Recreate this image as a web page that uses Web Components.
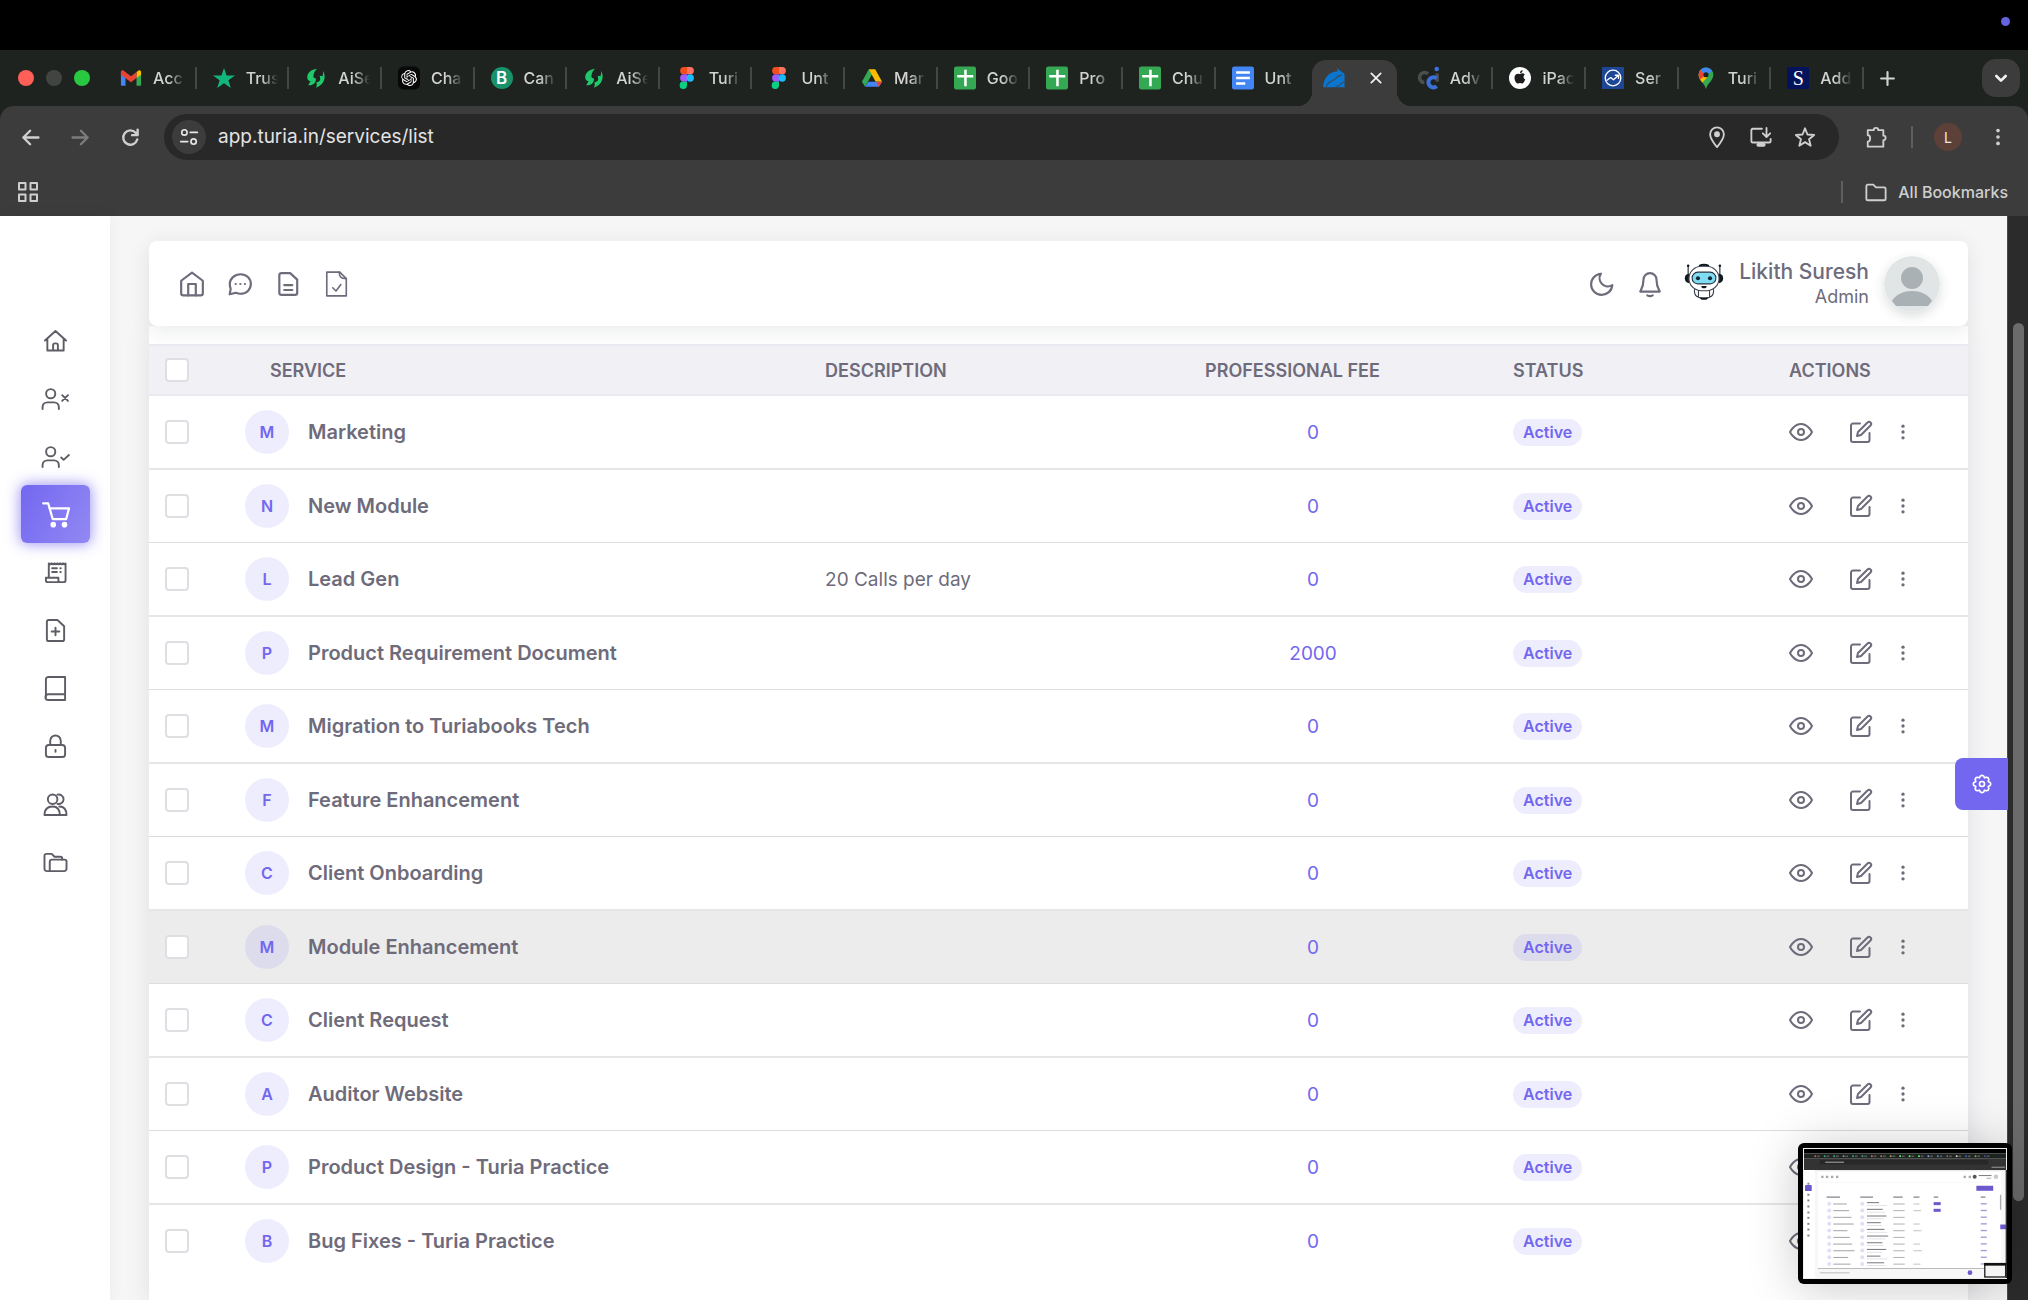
<!DOCTYPE html>
<html lang="en">
<head>
<meta charset="utf-8">
<meta name="viewport" content="width=device-width, initial-scale=1">
<title>Turia - Services</title>
<style>
  html, body {
    margin: 0;
    height: 100%;
    overflow: hidden;
    background-color: #000;
    font-family: Inter, "Liberation Sans", sans-serif;
  }

  body {
    display: flex;
    flex-direction: column;
  }
</style>
</head>
<body>

<system-bar></system-bar>
<tab-strip></tab-strip>
<address-bar url="app.turia.in/services/list"></address-bar>
<bookmarks-bar></bookmarks-bar>
<page-view>
  <side-menu slot="menu"></side-menu>
  <app-navbar>
    <span slot="name">Likith Suresh</span>
    <span slot="role">Admin</span>
  </app-navbar>
  <services-table></services-table>
</page-view>
<screen-preview></screen-preview>

<script>
const gearPath = () => {
  let d = ''
  for (let i = 0; i < 16; i++) {
    const a = i * Math.PI / 8
    const b = a + Math.PI / 8
    const r = i % 2 ? 8 : 10.5
    const n = i % 2 ? 10.5 : 8
    const x = 12 + r * Math.sin(a)
    const y = 12 - r * Math.cos(a)
    const mx = 12 + ((r + n) / 2 + 0.6) * Math.sin((a + b) / 2)
    const my = 12 - ((r + n) / 2 + 0.6) * Math.cos((a + b) / 2)
    d += `${i ? 'L' : 'M'}${x.toFixed(1)} ${y.toFixed(1)}L${mx.toFixed(1)} ${my.toFixed(1)}`
  }
  return d + 'Z'
}

const person = '<circle cx="7" cy="7" r="4.800"/><path d="M-1.500 23v-2a5 5 0 0 1 5-5h7a5 5 0 0 1 5 5v2"/>'

// Outline icons are drawn with currentColor, brand icons bring their own fills.
const icons = {
  home: '<path d="M2 9l10-7.500L22 9v11.500a2 2 0 0 1-2 2H4a2 2 0 0 1-2-2z"/><path d="M8.500 22.500V12h7v10.500"/>',
  chat: '<path d="M12.500 3C18 3 22 7 22 12s-4 9-9.500 9c-1.500 0-3-.3-4.200-.9L2.500 21.500l.9-5C3 15.500 2.600 14 2.600 12 2.600 7 7 3 12.500 3z"/><path d="M8 12h.1M12.300 12h.1M16.500 12h.1"/>',
  file: '<path d="M4 4a2 2 0 0 1 2-2h8l6.500 6v12a2 2 0 0 1-2 2H6a2 2 0 0 1-2-2z"/><path d="M8.500 13h7.500M8.500 17.500h7.500"/>',
  fileCheck: '<path d="M3.500 1h12l6 6v16h-18z"/><path d="M15 1c0 4 1 6 6.500 6M9 15.500l3 3 4.500-6"/>',
  moon: '<path d="M21.500 13A9.800 9.800 0 1 1 11 2.500 7.600 7.600 0 0 0 21.500 13z"/>',
  bell: '<path d="M18 8A6 6 0 0 0 6 8c0 6-2 9-3 11h18c-1-2-3-5-3-11"/><path d="M9.500 22.500a4 3 0 0 0 5 0"/>',
  eye: '<path d="M1 12s4-8 11-8 11 8 11 8-4 8-11 8-11-8-11-8z"/><circle cx="12" cy="12" r="3"/>',
  edit: '<path d="M11 3.500H4a2 2 0 0 0-2 2V20a2 2 0 0 0 2 2h14.500a2 2 0 0 0 2-2v-7"/><path d="M18.500 2.500a2.100 2.100 0 0 1 3 3L12 15l-4 1 1-4z"/>',
  dots: '<g fill="currentColor" stroke="none"><circle cx="12" cy="5" r="2"/><circle cx="12" cy="12" r="2"/><circle cx="12" cy="19" r="2"/></g>',
  house: '<path d="M1 12L12 2l11 10M3.500 10v12.500h17V10M9.500 22.500V17a2 2 0 0 1 2-2h1a2 2 0 0 1 2 2v5.500"/>',
  userX: person + '<path d="M19 8.500l6 6M25 8.500l-6 6"/>',
  userCheck: person + '<path d="M18 13l2.500 2.500 5.500-5"/>',
  cart: '<path d="M1 2h4.500l4 14h12L24 6.500H6.500"/><circle cx="10" cy="21" r="1.500" fill="currentColor"/><circle cx="20" cy="21" r="1.500" fill="currentColor"/>',
  receipt: '<path d="M5 17V2.500l1.500 1L8 2.500l1.500 1 1.500-1 1.500 1 1.500-1 1.500 1 1.500-1 1.500 1 1.500-1 1.500 1 1 -1V20a2 2 0 0 1-2 2H4a2 2 0 0 1-2-2v-2.500h13V20a2 2 0 0 0 2 2"/><path d="M8.500 7.500h5M8.500 11.500h5M17 7.500h.5M17 11.500h.5"/>',
  filePlus: '<path d="M3 3a2 2 0 0 1 2-2h9l7 6.500V21a2 2 0 0 1-2 2H5a2 2 0 0 1-2-2z"/><path d="M12 9v8M8 13h8"/>',
  book: '<path d="M2 21V2.500A2.500 2.500 0 0 1 4.500 0H22v24H4.500a3 3 0 0 1 0-6H22"/>',
  lock: '<rect x="2" y="10.500" width="20" height="12.500" rx="3"/><path d="M6.500 10.500V6a5.500 5.500 0 0 1 11 0v4.500M12 15.500v2"/>',
  users: '<circle cx="9" cy="6.500" r="5"/><path d="M.500 23c0-6 3-9 8.500-9s7.500 3 7.500 9zM14 1.700a5 5 0 1 1 0 9.600M16 14c5 0 7.500 3 7.500 9h-7"/>',
  folders: '<path d="M6 21H3a2.500 2.500 0 0 1-2.500-2.500V5a2 2 0 0 1 2-2H8l3 3h6a2 2 0 0 1 2 2v1"/><path d="M6 21v-9.500A2.500 2.500 0 0 1 8.500 9h13a2 2 0 0 1 2 2v7.500A2.500 2.500 0 0 1 21 21z"/>',
  gear: `<path d="${gearPath()}"/><circle cx="12" cy="12" r="3"/>`,
  back: '<path d="M22 12H3M11.500 3.500L3 12l8.500 8.500"/>',
  forward: '<path d="M2 12h19M12.500 3.500L21 12l-8.500 8.500"/>',
  reload: '<path d="M20.500 14.500A9 9 0 1 1 18.500 6l2 2.500M21 2v7h-7"/>',
  tune: '<circle cx="6.500" cy="6.500" r="3.200"/><path d="M13.500 6.500H22M2 17.500h8.500"/><circle cx="17.500" cy="17.500" r="3.200"/>',
  pin: '<path d="M12 23C7 17 4.500 13 4.500 9a7.500 7.500 0 0 1 15 0c0 4-2.500 8-7.500 14z"/><circle cx="12" cy="9" r="2.200" fill="currentColor"/>',
  install: '<path d="M13 3H3A1.500 1.500 0 0 0 1.500 4.500v12A1.500 1.500 0 0 0 3 18h18a1.500 1.500 0 0 0 1.500-1.500V14M18 2v9M14 8l4 4 4-4"/><path d="M9 20.500h6" stroke-width="4"/>',
  star: '<path d="M12 2.500l2.700 6.800 7.300.5-5.600 4.700 1.800 7-6.200-3.900-6.200 3.900 1.800-7L2 9.800l7.300-.5z"/>',
  puzzle: '<path d="M3 4.500h6.500a2.500 2.500 0 0 1 5 0H20v6a2.500 2.500 0 0 1 0 5V22.500H3V17c3.500 0 3.500-7 0-7z"/>',
  grid: '<path d="M3 3h6.500v6.500H3zM14.500 3H21v6.500h-6.500zM3 14.500h6.500V21H3zM14.500 14.500H21V21h-6.500z"/>',
  folder: '<path d="M1.500 5.500A1.500 1.500 0 0 1 3 4h6l3 3h9a1.500 1.500 0 0 1 1.500 1.500v11A1.500 1.500 0 0 1 21 21H3a1.500 1.500 0 0 1-1.500-1.500z"/>',
  plus: '<path d="M12 3v18M3 12h18"/>',
  chevron: '<path d="M5 9l7 7 7-7"/>',
  close: '<path d="M4 4l16 16M20 4L4 20"/>',

  gmail: '<g stroke="none"><path d="M1 20V5l5 4v11.500H2.500A1.500 1.500 0 0 1 1 20z" fill="#4285f4"/><path d="M23 20V5l-5 4v11.500h3.500A1.500 1.500 0 0 0 23 20z" fill="#34a853"/><path d="M18 5.500L20 4c1.500-1 3 0 3 2v2.500L18 12z" fill="#fbbc04"/><path d="M1 8.500V6c0-2 1.500-3 3-2l8 6 6-4.500V12l-6 4.500z" fill="#ea4335"/></g>',
  trust: '<path d="M12 1l2.800 8.200H24l-7.200 5.300 2.600 8.500-7.400-5.200L4.600 23l2.600-8.500L0 9.200h9.200z" fill="#12b57b" stroke="none"/>',
  sense: '<g fill="#1fc96b" stroke="none"><path d="M13 2C6 3 2 7 2.500 12c.2 2 1.500 3.200 3.500 3.500L3.500 20c6 0 8.500-3 8.500-7.500-2 0-3-1-2.800-3C9.500 6.500 11 4 13 2z"/><path d="M19.500 4c4 6 2 15-7.500 18.500 1-2 1-4 .5-6 3 0 4.500-1.500 4-4.500l-.5-2.500 3 .5c.8-2 .9-4 .5-6z"/></g>',
  gpt: '<rect y="-.5" width="24" height="25" rx="6" fill="#080808" stroke="none"/><path transform="translate(3.400 3.400) scale(.72)" fill="#fff" stroke="none" d="M22.282 9.821a5.985 5.985 0 0 0-.516-4.911 6.046 6.046 0 0 0-6.510-2.900A6.065 6.065 0 0 0 4.981 4.182a5.985 5.985 0 0 0-3.998 2.900 6.046 6.046 0 0 0 .743 7.097 5.980 5.980 0 0 0 .511 4.911 6.051 6.051 0 0 0 6.515 2.900A5.985 5.985 0 0 0 13.260 24a6.056 6.056 0 0 0 5.772-4.206 5.989 5.989 0 0 0 3.998-2.900 6.056 6.056 0 0 0-.748-7.073zm-9.022 12.608a4.476 4.476 0 0 1-2.876-1.041l.142-.080 4.778-2.758a.795.795 0 0 0 .393-.681v-6.737l2.020 1.169a.071.071 0 0 1 .038.052v5.583a4.504 4.504 0 0 1-4.495 4.494zm-9.661-4.125a4.471 4.471 0 0 1-.535-3.014l.142.085 4.783 2.758a.771.771 0 0 0 .781 0l5.843-3.369v2.332a.080.080 0 0 1-.033.062L9.740 19.950a4.499 4.499 0 0 1-6.141-1.646zM2.341 7.896a4.485 4.485 0 0 1 2.366-1.973V11.600a.766.766 0 0 0 .388.677l5.814 3.354-2.020 1.169a.076.076 0 0 1-.071 0l-4.830-2.787A4.504 4.504 0 0 1 2.341 7.872zm16.596 3.856L13.104 8.364 15.119 7.200a.076.076 0 0 1 .071 0l4.830 2.791a4.494 4.494 0 0 1-.677 8.104v-5.677a.790.790 0 0 0-.407-.667zm2.011-3.023l-.142-.085-4.774-2.782a.776.776 0 0 0-.785 0L9.409 9.230V6.897a.066.066 0 0 1 .028-.062l4.830-2.787a4.499 4.499 0 0 1 6.680 4.660zM8.307 12.863l-2.020-1.164a.080.080 0 0 1-.038-.057V6.074a4.499 4.499 0 0 1 7.376-3.454l-.142.081L8.704 5.459a.795.795 0 0 0-.393.681zm1.098-2.365l2.602-1.500 2.607 1.500v2.999l-2.597 1.500-2.607-1.500z"/>',
  figma: '<g stroke="none"><path d="M8.500 0H12v8H8.500a4 4 0 0 1 0-8z" fill="#f24e1e"/><path d="M12 0h3.500a4 4 0 0 1 0 8H12z" fill="#ff7262"/><path d="M8.500 8H12v8H8.500a4 4 0 0 1 0-8z" fill="#a259ff"/><circle cx="15.500" cy="12" r="4" fill="#1abcfe"/><path d="M8.500 16H12v4a4 4 0 1 1-3.500-4z" fill="#0acf83"/></g>',
  drive: '<g stroke="none"><path d="M8.500 2.500L1 16l3.500 5.500L12 8z" fill="#34a853"/><path d="M8.500 2.500h7L23 16h-7z" fill="#fbbc04"/><path d="M4.500 21.500L8 16h15l-3.500 5.500z" fill="#4285f4"/><path d="M16.500 16H23l-3.500 5.500z" fill="#ea4335"/></g>',
  sheet: '<rect y="-.5" width="24" height="25" rx="2.500" fill="#34a853" stroke="none"/><path d="M12.500 3v18M3.500 10h17.500" stroke="#fff" stroke-width="2.800" stroke-linecap="butt"/>',
  doc: '<rect y="-.5" width="24" height="25" rx="2.500" fill="#4285f4" stroke="none"/><path d="M4.500 6h15M4.500 12h15M4.500 18h10" stroke="#fff" stroke-width="2.800" stroke-linecap="butt"/>',
  turia: '<path d="M0 22C1 11 7 5 16 4.500l-1-3.500L23.500 7.500V22z" fill="#0b76cf" stroke="none"/><path d="M3.500 22c1-7 8-6 10.500-9.500C16 9.500 18 9 20.500 9M13 22c5 0 6-5 11-6" stroke="#30506c" stroke-width="1.400"/>',
  ci: '<path d="M12 7.500A5.500 5.500 0 1 0 8 17" stroke="#4c4d4d" stroke-width="3.800" stroke-linecap="butt"/><path d="M22 7v9" stroke="#4c4d4d" stroke-width="3.800" stroke-linecap="butt"/><circle cx="21.500" cy="2.200" r="2.500" fill="#3f6fe0" stroke="none"/><path d="M21.500 12.500a5.500 5.500 0 1 0 0 8.500" stroke="#3a70d8" stroke-width="4.500" stroke-linecap="butt"/>',
  apple: '<circle cx="12" cy="12" r="12" fill="#fff" stroke="none"/><path d="M12.500 7.500c1.500-1 3.500-.8 4.700.8-2 1.500-1.800 4.300.5 5.400-.8 2.500-2.200 4.300-3.400 4.300-.8 0-1.300-.5-2.200-.5s-1.500.5-2.300.5C7.800 18 6 14.500 6 11.700c0-3.500 3-5.200 5.300-4.100zM12 6.800c0-2 1-3.300 2.800-3.600.1 2-1 3.400-2.800 3.600z" fill="#1b1e1c" stroke="none"/>',
  trend: '<rect width="24" height="24" fill="#1d4796" stroke="none"/><g stroke="#fff" stroke-width="1.400"><circle cx="12" cy="12" r="8.500"/><path d="M5.500 14.500l4-3 3 2.500 5-4.500M14.500 9h3.500v3.500"/></g>',
  maps: '<g stroke="none"><path d="M12 24C10 17 4 15 4 8.500A8 8 0 0 1 12 .5a8 8 0 0 1 8 8C20 15 14 17 12 24z" fill="#34a853"/><path d="M4 8.500A8 8 0 0 1 6 3.200L14 11l-6 6C6 14.500 4 12 4 8.500z" fill="#fbbc04"/><path d="M4 8.500A8 8 0 0 1 6 3.200l6 5.300-6.500 5C4.500 12 4 10.500 4 8.500z" fill="#ea4335"/><path d="M6 3.200A8 8 0 0 1 18.500 4L12 10z" fill="#4285f4"/><circle cx="12" cy="8.500" r="2.800" fill="#1f2320"/></g>',
  robot: '<g stroke="none"><path d="M7 20h10v4.500H7z" fill="#fff"/><path d="M2 .5v8M22 .5v8" stroke="#39424e" stroke-width=".8"/><circle cx="2" cy=".5" r=".8" fill="#111820"/><circle cx="22" cy=".5" r=".8" fill="#111820"/><path d="M8.800 0a4.500 2.600 0 0 1 6.400 0v1.500H8.800zM2.500 5.500C-1 5.500-1 11 2.500 11.500zM21.500 5.500c3.500 0 3.500 5.500 0 6z" fill="#111820"/><rect x="2.500" y=".8" width="19" height="15.500" rx="8" fill="#fff" stroke="#39424e" stroke-width=".7"/><rect x="4.500" y="4.500" width="15" height="7.400" rx="3.600" fill="#7fdcf2" stroke="#24323f" stroke-width=".7"/><circle cx="8.200" cy="8.400" r="1.300" fill="#102838"/><circle cx="15.800" cy="8.400" r="1.300" fill="#102838"/><path d="M10.300 13.200h3.400a1.700 1.500 0 0 1-3.400 0z" fill="#111820"/><path d="M6 15.500c-.5 4 2 5.500 6 5.500s6.500-1.500 6-5.500M8.500 16.500v3.500M15.500 16.500v3.500" fill="none" stroke="#39424e" stroke-width=".7"/><path d="M9 20.500h6l-1.500 1.500h-3z" fill="#111820"/></g>'
}

class UiIcon extends HTMLElement {
  constructor () {
    super()
    this.shadow = this.attachShadow({ mode: 'open' })
  }

  connectedCallback () {
    const weight = this.getAttribute('weight') || 2
    this.shadow.innerHTML =
    /*html*/`
    <style>
      :host {
        display: block;
        flex: none;
        width: var(--icon-size, 24px);
        height: var(--icon-size, 24px);
      }

      svg {
        display: block;
        width: 100%;
        height: 100%;
        overflow: visible;
      }
    </style>
    <svg viewBox="0 0 24 24" fill="none" stroke="currentColor" stroke-width="${weight}" stroke-linecap="round" stroke-linejoin="round" aria-hidden="true">${icons[this.getAttribute('name')]}</svg>
    `
  }
}

customElements.define('ui-icon', UiIcon)

class SystemBar extends HTMLElement {
  constructor () {
    super()
    this.shadow = this.attachShadow({ mode: 'open' })
  }

  connectedCallback () {
    this.shadow.innerHTML =
    /*html*/`
    <style>
      :host {
        box-sizing: border-box;
        flex: none;
        display: flex;
        justify-content: flex-end;
        height: 50px;
        padding: 17px 18px 0 0;
        background-color: #000;
      }

      i {
        width: 9px;
        height: 9px;
        border-radius: 50%;
        background-color: #6563e2;
      }
    </style>
    <i></i>
    `
  }
}

customElements.define('system-bar', SystemBar)

class TabStrip extends HTMLElement {
  constructor () {
    super()
    this.shadow = this.attachShadow({ mode: 'open' })
    this.letters = { brevo: 'B', serif: 'S' }
    this.tabs = [
      ['gmail', 'Acc'], ['trust', 'Trus'], ['sense', 'AiSe'], ['gpt', 'Cha'], ['brevo', 'Can'],
      ['sense', 'AiSe'], ['figma', 'Turi'], ['figma', 'Unt'], ['drive', 'Mar'], ['sheet', 'Goo'],
      ['sheet', 'Pro'], ['sheet', 'Chu'], ['doc', 'Unt'], ['turia', ''], ['ci', 'Adv'],
      ['apple', 'iPac'], ['trend', 'Ser'], ['maps', 'Turi'], ['serif', 'Add']
    ]
  }

  renderTab ([icon, text]) {
    const letter = this.letters[icon]
    const mark = letter ? `<b class="${icon}">${letter}</b>` : `<ui-icon name="${icon}"></ui-icon>`
    if (!text) {
      return `<div class="tab active">${mark}<button aria-label="Close tab"><ui-icon name="close" weight="3"></ui-icon></button></div>`
    }
    return `<a class="tab" href="#">${mark}<span>${text}</span></a>`
  }

  connectedCallback () {
    this.shadow.innerHTML =
    /*html*/`
    <style>
      :host {
        flex: none;
        display: flex;
        align-items: center;
        height: 56px;
        background-color: #1f2320;
        color: #d2d3d2;
        --icon-size: 22px;
      }

      * {
        box-sizing: border-box;
      }

      button {
        display: grid;
        place-items: center;
        border: 0;
        padding: 0;
        background: none;
        color: inherit;
      }

      .lights {
        display: flex;
        gap: 12px;
        width: 104px;
        padding-left: 18px;
      }

      .lights button {
        width: 16px;
        height: 16px;
        border-radius: 50%;
        background-color: #fe5f57;
      }

      .lights button:nth-child(2) { background-color: #424442; }
      .lights button:nth-child(3) { background-color: #28c940; }

      .tabs {
        flex: 1;
        min-width: 0;
        display: grid;
        grid-template-columns: repeat(${this.tabs.length}, minmax(0, 1fr));
        height: 100%;
      }

      .tab {
        position: relative;
        display: flex;
        align-items: center;
        gap: 11px;
        padding-left: 16px;
        color: inherit;
        font-size: 16px;
        font-weight: 500;
        text-decoration: none;
      }

      .tab span {
        white-space: nowrap;
        -webkit-mask-image: linear-gradient(to right, #000 16px, transparent 32px);
        mask-image: linear-gradient(to right, #000 16px, transparent 32px);
      }

      .tab::after {
        content: '';
        position: absolute;
        top: 17px;
        right: 0;
        width: 2px;
        height: 22px;
        background-color: #444744;
      }

      .tab:has(+ .active)::after {
        display: none;
      }

      .active {
        justify-content: space-between;
        margin: 10px 4px 0;
        padding: 0 14px 10px 11px;
        border-radius: 14px 14px 0 0;
        background-color: #3c3c3c;
        color: #f2f2f2;
      }

      /* flared feet of the selected tab */
      .active::before,
      .active::after {
        content: '';
        position: absolute;
        top: auto;
        bottom: 0;
        width: 14px;
        height: 14px;
        background: radial-gradient(circle at 0 0, transparent 14px, #3c3c3c 14px);
      }

      .active::before { left: -14px; }
      .active::after { right: -14px; transform: scaleX(-1); }

      .active button {
        --icon-size: 14px;
      }

      b {
        display: grid;
        place-items: center;
        width: 22px;
        height: 22px;
        color: #fff;
      }

      .serif {
        background-color: #04145c;
        font: 20px/22px "Liberation Serif", serif;
      }

      .brevo {
        border-radius: 50%;
        background-color: #17926a;
        font-size: 17px;
        font-weight: 600;
      }

      .add {
        width: 46px;
        --icon-size: 17px;
      }

      .menu {
        width: 38px;
        height: 38px;
        margin: 0 8px 0 72px;
        border-radius: 14px;
        background-color: #3c3c3c;
        color: #f2f2f2;
        --icon-size: 16px;
      }
    </style>

    <div class="lights">
      <button aria-label="Close"></button>
      <button aria-label="Minimise"></button>
      <button aria-label="Zoom"></button>
    </div>
    <nav class="tabs">${this.tabs.map(tab => this.renderTab(tab)).join('')}</nav>
    <button class="add" aria-label="New tab"><ui-icon name="plus" weight="3"></ui-icon></button>
    <button class="menu" aria-label="Search tabs"><ui-icon name="chevron" weight="4"></ui-icon></button>
    `
  }
}

customElements.define('tab-strip', TabStrip)

class AddressBar extends HTMLElement {
  constructor () {
    super()
    this.shadow = this.attachShadow({ mode: 'open' })
  }

  connectedCallback () {
    this.shadow.innerHTML =
    /*html*/`
    <style>
      :host {
        flex: none;
        display: block;
        background-color: #1f2320;
        color: #cfcfcf;
        --icon-size: 22px;
      }

      * {
        box-sizing: border-box;
      }

      .bar {
        display: flex;
        align-items: center;
        gap: 18px;
        height: 62px;
        padding: 0 14px;
        border-radius: 14px 14px 0 0;
        background-color: #3c3c3c;
      }

      button {
        display: grid;
        place-items: center;
        width: 32px;
        height: 32px;
        padding: 0;
        border: 0;
        border-radius: 50%;
        background: none;
        color: inherit;
      }

      .nav {
        --icon-size: 19px;
      }

      .off {
        color: #7c7c7c;
      }

      .address {
        flex: 1;
        display: flex;
        align-items: center;
        gap: 12px;
        height: 46px;
        margin-right: 3px;
        padding: 0 18px 0 8px;
        border-radius: 23px;
        background-color: #282828;
      }

      .tune {
        width: 34px;
        height: 34px;
        background-color: #3c3c3c;
        color: #e6e6e6;
        --icon-size: 20px;
      }

      input {
        flex: 1;
        min-width: 0;
        padding: 0;
        border: 0;
        outline: 0;
        background: none;
        color: #e3e3e3;
        font-family: inherit;
        font-size: 19px;
        line-height: 24px;
      }

      hr {
        width: 2px;
        height: 22px;
        margin: 0 1px;
        border: 0;
        background-color: #5f5f5f;
      }

      .profile {
        width: 28px;
        height: 28px;
        margin: 0 2px;
        background-color: #5d4037;
        color: #f0e6e2;
        font-family: inherit;
        font-size: 14px;
      }
    </style>

    <div class="bar">
      <button class="nav" aria-label="Back"><ui-icon name="back" weight="3"></ui-icon></button>
      <button class="nav off" aria-label="Forward"><ui-icon name="forward" weight="3"></ui-icon></button>
      <button class="nav" aria-label="Reload"><ui-icon name="reload" weight="3"></ui-icon></button>
      <div class="address">
        <button class="tune" aria-label="Site information"><ui-icon name="tune"></ui-icon></button>
        <input type="text" aria-label="Address" value="${this.getAttribute('url')}">
        <button aria-label="Location"><ui-icon name="pin"></ui-icon></button>
        <button aria-label="Install app"><ui-icon name="install"></ui-icon></button>
        <button aria-label="Bookmark"><ui-icon name="star"></ui-icon></button>
      </div>
      <button aria-label="Extensions"><ui-icon name="puzzle"></ui-icon></button>
      <hr>
      <button class="profile">L</button>
      <button aria-label="Menu"><ui-icon name="dots"></ui-icon></button>
    </div>
    `
  }
}

customElements.define('address-bar', AddressBar)

class BookmarksBar extends HTMLElement {
  constructor () {
    super()
    this.shadow = this.attachShadow({ mode: 'open' })
  }

  connectedCallback () {
    this.shadow.innerHTML =
    /*html*/`
    <style>
      :host {
        box-sizing: border-box;
        flex: none;
        display: flex;
        align-items: center;
        justify-content: space-between;
        height: 48px;
        padding: 0 20px 0 16px;
        background-color: #3c3c3c;
        color: #cfcfcf;
        --icon-size: 24px;
      }

      button {
        display: flex;
        align-items: center;
        gap: 11px;
        padding: 0;
        border: 0;
        background: none;
        color: inherit;
        font-family: inherit;
        font-size: 16px;
        font-weight: 500;
      }

      .all {
        padding-left: 22px;
        border-left: 2px solid #5f5f5f;
        --icon-size: 22px;
      }
    </style>
    <button aria-label="Apps"><ui-icon name="grid"></ui-icon></button>
    <button class="all"><ui-icon name="folder"></ui-icon>All Bookmarks</button>
    `
  }
}

customElements.define('bookmarks-bar', BookmarksBar)

class PageView extends HTMLElement {
  constructor () {
    super()
    this.shadow = this.attachShadow({ mode: 'open' })
  }

  connectedCallback () {
    this.shadow.innerHTML =
    /*html*/`
    <style>
      :host {
        flex: 1;
        min-height: 0;
        display: flex;
        background-color: #f6f6f7;
        color: #6e6b7b;
      }

      main {
        flex: 1;
        min-width: 0;
        box-sizing: border-box;
        display: flex;
        flex-direction: column;
        padding: 25px 39px 0;
      }

      .edge {
        position: relative;
        box-sizing: border-box;
        width: 21px;
        padding: 107px 4px 99px 5px;
        border-left: 1px solid #4a4a4a;
        background-color: #2b2b2b;
      }

      .thumb {
        height: 100%;
        border-radius: 6px;
        background-color: #6b6b6b;
      }

      .customizer {
        position: absolute;
        top: 50%;
        right: 20px;
        display: grid;
        place-items: center;
        width: 53px;
        height: 52px;
        padding: 0;
        border: 0;
        border-radius: 8px 0 0 8px;
        background-color: #7367f0;
        color: #fff;
        --icon-size: 20px;
      }
    </style>

    <slot name="menu"></slot>
    <main><slot></slot></main>
    <div class="edge">
      <div class="thumb"></div>
      <button class="customizer" aria-label="Customizer"><ui-icon name="gear"></ui-icon></button>
    </div>
    `
  }
}

customElements.define('page-view', PageView)

class SideMenu extends HTMLElement {
  constructor () {
    super()
    this.shadow = this.attachShadow({ mode: 'open' })
    this.items = [
      ['house', 'Dashboard'], ['userX', 'Leads'], ['userCheck', 'Clients'], ['cart', 'Services'],
      ['receipt', 'Invoices'], ['filePlus', 'Documents'], ['book', 'Ledger'], ['lock', 'Passwords'],
      ['users', 'Team'], ['folders', 'Files']
    ]
  }

  connectedCallback () {
    this.shadow.innerHTML =
    /*html*/`
    <style>
      :host {
        position: relative;
        box-sizing: border-box;
        flex: none;
        width: 110px;
        padding: 95px 20px 0 21px;
        background-color: #fff;
        box-shadow: 0 0 15px rgba(34, 41, 47, 0.05);
        --icon-size: 23px;
      }

      nav {
        display: flex;
        flex-direction: column;
      }

      a {
        display: grid;
        place-items: center;
        height: 58px;
        border-radius: 6px;
        color: #5f5c66;
      }

      .current {
        background: linear-gradient(118deg, #7367f0, #9289f3);
        box-shadow: 0 0 14px 1px rgba(115, 103, 240, 0.7);
        color: #fff;
        --icon-size: 27px;
      }
    </style>
    <nav>
      ${this.items.map(([icon, label]) => `<a href="#" aria-label="${label}" ${icon === 'cart' ? 'class="current"' : ''}><ui-icon name="${icon}"></ui-icon></a>`).join('')}
    </nav>
    `
  }
}

customElements.define('side-menu', SideMenu)

class AppNavbar extends HTMLElement {
  constructor () {
    super()
    this.shadow = this.attachShadow({ mode: 'open' })
  }

  connectedCallback () {
    this.shadow.innerHTML =
    /*html*/`
    <style>
      :host {
        position: relative;
        z-index: 1;
        box-sizing: border-box;
        flex: none;
        display: flex;
        align-items: center;
        justify-content: space-between;
        height: 85px;
        padding: 0 28px 0 30px;
        border-radius: 8px;
        background-color: #fff;
        box-shadow: 0 4px 20px rgba(34, 41, 47, 0.1);
        color: #6e6b7b;
        --icon-size: 26px;
      }

      div {
        display: flex;
        align-items: center;
        gap: 22px;
      }

      button {
        padding: 0;
        border: 0;
        background: none;
        color: inherit;
      }

      .robot {
        display: grid;
        justify-items: end;
        width: 32px;
        --icon-size: 38px;
      }

      .user {
        display: flex;
        align-items: center;
        gap: 15px;
      }

      .user p {
        margin: 0;
        text-align: right;
        font-size: 18px;
        line-height: 24px;
      }

      .user p:first-child {
        font-size: 21px;
        font-weight: 500;
        line-height: 26px;
      }

      .avatar {
        display: block;
        width: 56px;
        height: 56px;
        border-radius: 50%;
        box-shadow: 0 4px 12px rgba(34, 41, 47, 0.16);
      }
    </style>

    <div>
      <button aria-label="Home"><ui-icon name="home"></ui-icon></button>
      <button aria-label="Chat"><ui-icon name="chat"></ui-icon></button>
      <button aria-label="Notes"><ui-icon name="file"></ui-icon></button>
      <button aria-label="Tasks"><ui-icon name="fileCheck" weight="1.5"></ui-icon></button>
    </div>
    <div>
      <button aria-label="Dark mode"><ui-icon name="moon"></ui-icon></button>
      <button aria-label="Notifications"><ui-icon name="bell"></ui-icon></button>
      <button class="robot" aria-label="Assistant"><ui-icon name="robot"></ui-icon></button>
      <section class="user">
        <section>
          <p><slot name="name"></slot></p>
          <p><slot name="role"></slot></p>
        </section>
        <svg class="avatar" viewBox="0 0 56 56" aria-hidden="true">
          <circle cx="28" cy="28" r="28" fill="#e2e5e6"/>
          <circle cx="28" cy="22" r="11" fill="#aab1b4"/>
          <path d="M8 45c4-7 12-10 20-10s16 3 20 10l-4 5H12z" fill="#aab1b4"/>
        </svg>
      </section>
    </div>
    `
  }
}

customElements.define('app-navbar', AppNavbar)

class LetterAvatar extends HTMLElement {
  constructor () {
    super()
    this.shadow = this.attachShadow({ mode: 'open' })
  }

  connectedCallback () {
    this.shadow.innerHTML =
    /*html*/`
    <style>
      :host {
        flex: none;
        display: grid;
        place-items: center;
        width: 44px;
        height: 44px;
        border-radius: 50%;
        background-color: rgba(115, 103, 240, 0.12);
        color: #7367f0;
        font-size: 16px;
        font-weight: 600;
      }
    </style>
    <slot></slot>
    `
  }
}

customElements.define('letter-avatar', LetterAvatar)

class StatusBadge extends HTMLElement {
  constructor () {
    super()
    this.shadow = this.attachShadow({ mode: 'open' })
  }

  connectedCallback () {
    this.shadow.innerHTML =
    /*html*/`
    <style>
      :host {
        display: inline-block;
        padding: 2px 10px;
        border-radius: 14px;
        background-color: rgba(115, 103, 240, 0.12);
        color: #7367f0;
        font-size: 16px;
        font-weight: 600;
        line-height: 23px;
        vertical-align: middle;
      }
    </style>
    <slot></slot>
    `
  }
}

customElements.define('status-badge', StatusBadge)

class ServicesTable extends HTMLElement {
  constructor () {
    super()
    this.shadow = this.attachShadow({ mode: 'open' })
    this.services = [
      { name: 'Marketing', fee: 0 },
      { name: 'New Module', fee: 0 },
      { name: 'Lead Gen', description: '20 Calls per day', fee: 0 },
      { name: 'Product Requirement Document', fee: 2000 },
      { name: 'Migration to Turiabooks Tech', fee: 0 },
      { name: 'Feature Enhancement', fee: 0 },
      { name: 'Client Onboarding', fee: 0 },
      { name: 'Module Enhancement', fee: 0, hover: true },
      { name: 'Client Request', fee: 0 },
      { name: 'Auditor Website', fee: 0 },
      { name: 'Product Design - Turia Practice', fee: 0 },
      { name: 'Bug Fixes - Turia Practice', fee: 0 }
    ]
  }

  renderRow (service) {
    return /*html*/`
    <tr ${service.hover ? 'class="hover"' : ''}>
      <td><input type="checkbox" aria-label="Select ${service.name}"></td>
      <td><div class="service"><letter-avatar>${service.name[0]}</letter-avatar><b>${service.name}</b></div></td>
      <td>${service.description || ''}</td>
      <td class="fee">${service.fee}</td>
      <td><status-badge>Active</status-badge></td>
      <td>
        <div class="actions">
          <button aria-label="View"><ui-icon name="eye"></ui-icon></button>
          <div>
            <button aria-label="Edit"><ui-icon name="edit"></ui-icon></button>
            <button class="more" aria-label="More"><ui-icon name="dots"></ui-icon></button>
          </div>
        </div>
      </td>
    </tr>`
  }

  connectedCallback () {
    this.shadow.innerHTML =
    /*html*/`
    <style>
      :host {
        flex: 1;
        min-height: 0;
        box-sizing: border-box;
        display: block;
        padding-top: 18px;
        background-color: #fff;
        box-shadow: 0 4px 24px rgba(34, 41, 47, 0.1);
        color: #6e6b7b;
        font-size: 19px;
      }

      * {
        box-sizing: border-box;
      }

      table {
        width: 100%;
        table-layout: fixed;
        border-spacing: 0;
      }

      th {
        height: 52px;
        padding: 0;
        border-top: 2px solid #ebe9f1;
        border-bottom: 2px solid #ebe9f1;
        background-color: #f1f0f5;
        font-size: 18px;
        font-weight: 600;
        text-align: left;
        text-transform: uppercase;
      }

      th:nth-child(1) { width: 94px; }
      th:nth-child(2) { width: 32%; padding-left: 27px; }
      th:nth-child(3) { width: 380px; }
      th:nth-child(4) { width: 308px; }
      th:nth-child(5) { width: 276px; }

      td {
        height: 73px;
        padding: 0;
        border-bottom: 1px solid #dcdcde;
      }

      tr:nth-child(odd) td {
        height: 74px;
        border-bottom: 2px solid #e6e6e8;
      }

      tr:last-child td {
        border-bottom-color: transparent;
      }

      .hover td {
        background-color: #ececec;
      }

      th:first-child,
      td:first-child {
        padding-left: 16px;
      }

      input {
        appearance: none;
        display: block;
        width: 24px;
        height: 24px;
        margin: 0;
        border: 2px solid #dfdee3;
        border-radius: 4px;
        background-color: #fff;
      }

      .service {
        display: flex;
        align-items: center;
        gap: 19px;
        padding-left: 2px;
      }

      b {
        font-size: 20px;
        font-weight: 600;
      }

      .fee {
        padding-right: 92px;
        color: #7367f0;
        text-align: center;
      }

      .actions {
        display: flex;
        gap: 36px;
      }

      .actions div {
        display: flex;
        gap: 18px;
      }

      button {
        padding: 0;
        border: 0;
        background: none;
        color: inherit;
      }

      .more {
        display: grid;
        place-items: center;
        width: 24px;
        --icon-size: 20px;
      }
    </style>

    <table>
      <thead>
        <tr>
          <th><input type="checkbox" aria-label="Select all services"></th>
          <th>Service</th>
          <th>Description</th>
          <th>Professional Fee</th>
          <th>Status</th>
          <th>Actions</th>
        </tr>
      </thead>
      <tbody>${this.services.map(this.renderRow).join('')}</tbody>
    </table>
    `
  }
}

customElements.define('services-table', ServicesTable)

class ScreenPreview extends HTMLElement {
  constructor () {
    super()
    this.shadow = this.attachShadow({ mode: 'open' })
  }

  bar (x, y, w, h, fill) {
    return `<rect x="${x}" y="${y}" width="${w}" height="${h}" fill="${fill}"/>`
  }

  drawRows () {
    let out = ''
    for (let i = 0; i < 10; i++) {
      const y = 166 + i * 20
      out += `<circle cx="78" cy="${y + 1}" r="6" fill="#e1def5"/><circle cx="176" cy="${y + 1}" r="6" fill="#e1def5"/>`
      out += this.bar(90, y, 40 + i * 7 % 26, 3, '#a3a2a8')
      out += this.bar(190, y - 4, 36 + i * 11 % 28, 3, '#77767c')
      out += this.bar(190, y + 5, 60 - i * 5 % 20, 2, '#d5d4d8')
      out += this.bar(268, y, 34, 3, '#b3b2b8')
      if (i % 3 !== 2) out += this.bar(328, y, 18 + i * 5 % 14, 3, '#c3c2c8')
      out += this.bar(528, y - 1, 18, 4, '#a29bd8')
      if (i < 2) out += this.bar(388, y - 4, 21, 9, '#6a5acd')
    }
    return out
  }

  drawChrome () {
    const tones = ['#c65', '#4a8', '#4a8', '#999', '#3a8', '#4a8', '#b76', '#b76', '#aa6', '#5f7', '#5f7', '#5f7', '#8af', '#49c', '#678', '#ddd', '#46b', '#9a6', '#45a']
    return tones.map((tone, i) => this.bar(34 + i * 28, 22, 5, 5, tone) + this.bar(42 + i * 28, 23, 8, 3, '#777')).join('')
  }

  connectedCallback () {
    const menu = [104, 137, 154, 172, 190, 206, 224, 241, 259].map(y => this.bar(13, y, 6, 6, '#85848c')).join('')
    this.shadow.innerHTML =
    /*html*/`
    <style>
      :host {
        position: fixed;
        right: 16px;
        bottom: 16px;
        box-sizing: border-box;
        width: 214px;
        height: 141px;
        padding: 5px;
        border-radius: 6px;
        background-color: #000;
        box-shadow: 0 4px 50px rgba(0, 0, 0, 0.22);
      }

      svg {
        display: block;
        width: 100%;
        height: 100%;
      }
    </style>
    <svg viewBox="0 0 606 392" preserveAspectRatio="none" role="img" aria-label="Screen preview">
      <rect width="606" height="392" fill="#eee"/>
      <rect x="3" y="3" width="600" height="386" fill="#f7f7f8"/>
      <rect x="3" y="3" width="600" height="13" fill="#000"/>
      <rect x="3" y="16" width="600" height="16" fill="#1f2320"/>
      <rect x="3" y="32" width="600" height="34" fill="#333"/>
      <rect x="50" y="36" width="500" height="13" fill="#282828"/>
      ${this.drawChrome()}
      ${this.bar(66, 41, 56, 3, '#aaa')}
      ${this.bar(560, 56, 40, 3, '#999')}
      <rect x="3" y="66" width="32" height="323" fill="#fff"/>
      <rect x="44" y="72" width="544" height="30" fill="#fff"/>
      <rect x="44" y="104" width="544" height="256" fill="#fff"/>
      ${[54, 68, 83, 98, 477, 492].map(x => this.bar(x, 83, 7, 7, '#a9a8ae')).join('')}
      <circle cx="510" cy="86" r="6" fill="#555"/><circle cx="573" cy="86" r="7" fill="#c9cccd"/>
      ${this.bar(522, 81, 38, 3, '#77767c')}${this.bar(545, 89, 14, 3, '#aaa')}
      ${menu}
      <rect x="6" y="111" width="20" height="18" rx="2" fill="#6a5acd"/>
      <rect x="515" y="113" width="50" height="15" fill="#6a5acd"/>
      ${[[70, 40], [170, 38], [268, 28], [328, 18], [388, 14], [528, 14]].map(([x, w]) => this.bar(x, 145, w, 4, '#8d8c93')).join('')}
      ${this.drawRows()}
      <rect x="44" y="359" width="544" height="3" fill="#bbb"/>
      ${this.bar(50, 372, 88, 3, '#bbb')}
      <circle cx="496" cy="373" r="7" fill="#6a5acd"/>
      <rect x="585" y="140" width="4" height="45" fill="#aaa"/>
      <rect x="586" y="229" width="17" height="14" fill="#6a5acd"/>
      <rect x="602" y="66" width="4" height="323" fill="#333"/>
      <rect x="540" y="346" width="62" height="40" fill="#f4f4f4" stroke="#222" stroke-width="4"/>
      <rect x="538" y="344" width="66" height="8" fill="#111"/>
    </svg>
    `
  }
}

customElements.define('screen-preview', ScreenPreview)
</script>
</body>
</html>
